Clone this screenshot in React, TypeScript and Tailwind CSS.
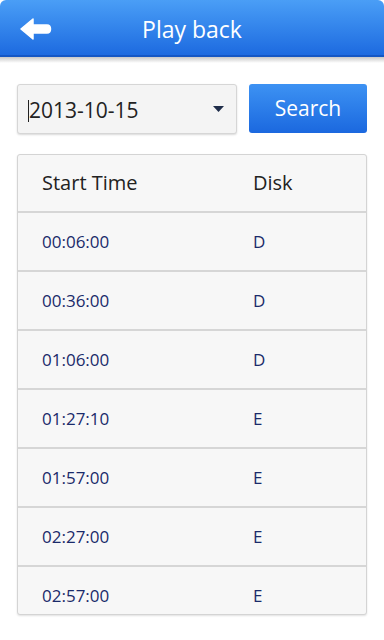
import React from 'react';

const rows = [
  { time: '00:06:00', disk: 'D' },
  { time: '00:36:00', disk: 'D' },
  { time: '01:06:00', disk: 'D' },
  { time: '01:27:10', disk: 'E' },
  { time: '01:57:00', disk: 'E' },
  { time: '02:27:00', disk: 'E' },
  { time: '02:57:00', disk: 'E' },
];

export default function App() {
  return (
    <div
      className="w-[384px] h-[640px] bg-white overflow-hidden flex flex-col"
      style={{ fontFamily: '"Open Sans", "Noto Sans", sans-serif' }}
    >
      {/* 顶部 */}
      <div className="relative h-[57px] shrink-0 rounded-t-[6px] bg-gradient-to-b from-[#4a9ef6] to-[#1d6ae0] border-b-[2px] border-[#1456c4] flex items-center justify-center">
        <button className="absolute left-[20px] top-[18px]">
          <svg width="32" height="22" viewBox="0 0 32 22">
            <path
              d="M1 11 L13 1 L13 7 L27 7 Q30.5 7 30.5 11 Q30.5 15 27 15 L13 15 L13 21 Z"
              fill="#fff"
              stroke="#fff"
              strokeWidth="1.5"
              strokeLinejoin="round"
            />
          </svg>
        </button>
        <h1 className="text-white text-[23px] leading-none font-normal mt-[3px]">Play back</h1>
      </div>
      <div className="h-[6px] shrink-0 bg-gradient-to-b from-[#c8c8c8] to-white" />

      {/* 日期 + 搜索 */}
      <div className="flex items-center gap-[12px] px-[17px] mt-[21px]">
        <div className="w-[220px] h-[50px] bg-[#f4f4f4] border border-[#d6d6d6] rounded-[3px] shadow-[0_1px_2px_rgba(0,0,0,0.15)] flex items-center pl-[10px] pr-[12px] pt-[3px]">
          <span className="w-px h-[22px] bg-[#222]" />
          <span className="text-[21px] text-[#222] flex-1">2013-10-15</span>
          <svg width="11" height="6" viewBox="0 0 11 6" className="-mt-[3px]">
            <path d="M0 0 L11 0 L5.5 6 Z" fill="#1f2d4a" />
          </svg>
        </div>
        <button className="w-[118px] h-[49px] -mt-[2px] pt-[1px] rounded-[3px] bg-gradient-to-b from-[#3d92f3] to-[#1b68df] text-white text-[21px]">
          Search
        </button>
      </div>

      {/* 列表 */}
      <div className="mx-[17px] mt-[20px] h-[461px] border border-[#d4d4d4] rounded-[3px] bg-[#f7f7f7] overflow-hidden shadow-[0_1px_2px_rgba(0,0,0,0.12)]">
        <div className="h-[58px] flex items-center border-b-[2px] border-[#d6d6d6] text-[20px] text-[#222]">
          <span className="w-[235px] pl-[24px]">Start Time</span>
          <span>Disk</span>
        </div>
        {rows.map((r) => (
          <div
            key={r.time}
            className="h-[59px] flex items-center pt-[1px] border-b-[2px] border-[#d6d6d6] text-[17px] text-[#1a2a6a]"
          >
            <span className="w-[235px] pl-[24px]">{r.time}</span>
            <span>{r.disk}</span>
          </div>
        ))}
      </div>
    </div>
  );
}
